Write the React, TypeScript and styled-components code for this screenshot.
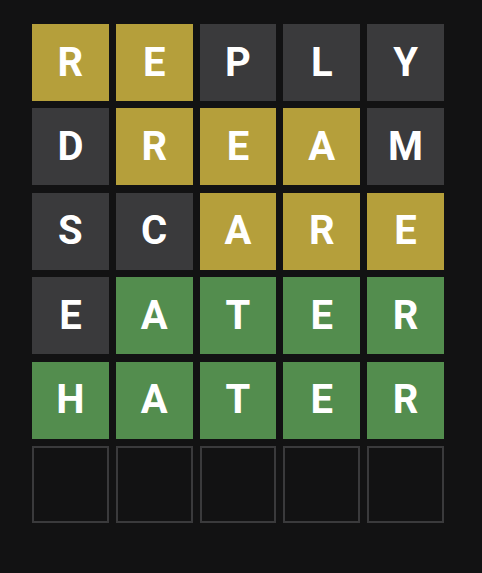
import React from "react";
import styled, { createGlobalStyle } from "styled-components";

const Global = createGlobalStyle`
  html, body { margin: 0; padding: 0; background: #121213; }
  body { width: 482px; height: 573px; overflow: hidden; }
`;

type State = "present" | "absent" | "correct" | "empty";

const Page = styled.div`
  padding: 24px 38px 0 32px;
`;

const Board = styled.div`
  display: grid;
  grid-template-columns: repeat(5, 1fr);
  grid-auto-rows: 77px;
  column-gap: 7px;
  row-gap: 7.4px;
  width: 412px;
`;

const colors: Record<State, string> = {
  present: "#b59f3b",
  absent: "#3a3a3c",
  correct: "#538d4e",
  empty: "transparent",
};

const Tile = styled.div<{ $state: State }>`
  box-sizing: border-box;
  display: flex;
  align-items: center;
  justify-content: center;
  background: ${(p) => colors[p.$state]};
  border: ${(p) => (p.$state === "empty" ? "2px solid #3a3a3c" : "none")};
  color: #ffffff;
  font-family: Roboto, "Liberation Sans", sans-serif;
  font-weight: 700;
  font-size: 40px;
  line-height: 1;
  text-transform: uppercase;
`;

const rows: [string, State[]][] = [
  ["REPLY", ["present", "present", "absent", "absent", "absent"]],
  ["DREAM", ["absent", "present", "present", "present", "absent"]],
  ["SCARE", ["absent", "absent", "present", "present", "present"]],
  ["EATER", ["absent", "correct", "correct", "correct", "correct"]],
  ["HATER", ["correct", "correct", "correct", "correct", "correct"]],
  ["     ", ["empty", "empty", "empty", "empty", "empty"]],
];

export default function App() {
  return (
    <>
      <Global />
      <Page>
        <Board>
          {rows.map(([word, states], r) =>
            states.map((s, c) => (
              <Tile key={`${r}-${c}`} $state={s}>
                {word[c].trim()}
              </Tile>
            ))
          )}
        </Board>
      </Page>
    </>
  );
}
